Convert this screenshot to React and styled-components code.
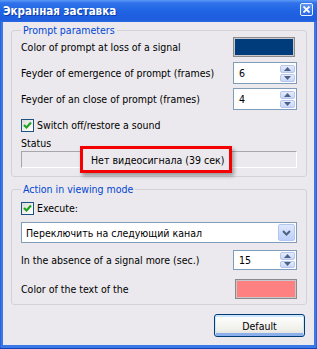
import React from 'react';
import styled, { createGlobalStyle } from 'styled-components';

const Global = createGlobalStyle`
	html, body {
		margin: 0;
		padding: 0;
		background: #ffffff;
	}
	body {
		font-family: "DejaVu Sans Condensed", "DejaVu Sans", sans-serif;
		font-size: 10.5px;
		color: #000;
	}
`;

const Window = styled.div`
	width: 317px;
	height: 349px;
	box-sizing: border-box;
	display: flex;
	flex-direction: column;
	padding: 0 3px 4px 3px;
	background: linear-gradient(90deg, #1a4fcc 0px, #3a78e8 1px, #3a78e8 316px, #1a4fcc 317px);
	box-shadow: inset 0 -1px 0 #1440b8;
`;

const TitleBar = styled.div`
	height: 22px;
	margin: 0 -3px;
	padding: 0 4px 0 3px;
	display: flex;
	align-items: center;
	justify-content: space-between;
	background: linear-gradient(#5b9af7 0px, #2f72ea 3px, #1f62e2 12px, #1e5ede 20px, #2c6ae2 22px);
`;

const Title = styled.span`
	color: #fff;
	font-family: "DejaVu Sans Condensed", "DejaVu Sans", sans-serif;
	font-weight: bold;
	font-size: 11.5px;
	text-shadow: 1px 1px 0 #0c3aa8;
	padding-bottom: 1px;
`;

const CloseButton = styled.div`
	width: 13px;
	height: 13px;
	box-sizing: border-box;
	border: 1px solid #e8eefc;
	border-radius: 2px;
	background: linear-gradient(#5f97f4, #2a68e4);
	display: flex;
	align-items: center;
	justify-content: center;
	margin-bottom: 3px;
`;

const Body = styled.div`
	flex: 1;
	background: #ebe9ed;
	padding: 2px 7px 0 8px;
	display: flex;
	flex-direction: column;
`;

const Group = styled.fieldset`
	margin: ${p => p.$top || 0}px 0 0 0;
	padding: 0 9px ${p => p.$bottom}px 9px;
	border: 1px solid #d3d0d6;
	border-radius: 3px;
	min-width: 0;
`;

const Legend = styled.legend`
	color: #0046d5;
	padding: 0 2px;
	margin-left: 0;
	line-height: 12px;
	font-size: 10.5px;
`;

const Row = styled.div`
	display: flex;
	align-items: center;
	justify-content: space-between;
	height: ${p => p.$h}px;
	margin-top: ${p => p.$mt || 0}px;
`;

const Label = styled.span`
	white-space: nowrap;
`;

const Swatch = styled.div`
	width: 62px;
	height: 20px;
	box-sizing: border-box;
	border: 1px solid #8a8a8a;
	box-shadow: inset 0 0 0 1px #c9c7cc;
	background: ${p => p.$color};
	margin-right: ${p => p.$mr || 0}px;
`;

const SpinBox = styled.div`
	width: 64px;
	height: ${p => p.$h}px;
	box-sizing: border-box;
	border: 1px solid #7f9db9;
	background: #fff;
	display: flex;
	align-items: center;
	justify-content: space-between;
	padding: 1px 1px 1px 5px;
`;

const SpinArrows = styled.div`
	display: flex;
	flex-direction: column;
	gap: 1px;
	height: 100%;
	justify-content: center;
`;

const SpinArrow = styled.div`
	width: 15px;
	height: 8px;
	box-sizing: border-box;
	border: 1px solid #b6c6ee;
	border-radius: 2px;
	background: linear-gradient(#e4ebfd, #c8d6f7);
	display: flex;
	align-items: center;
	justify-content: center;
`;

const CheckRow = styled.label`
	display: flex;
	align-items: center;
	gap: 3px;
	height: 14px;
	margin-top: ${p => p.$mt}px;
`;

const CheckBox = styled.span`
	width: 13px;
	height: 13px;
	box-sizing: border-box;
	border: 1px solid #1c5180;
	background: linear-gradient(135deg, #dcdcd7, #ffffff);
	display: flex;
	align-items: center;
	justify-content: center;
`;

const StatusCaption = styled.div`
	height: 12px;
	line-height: 12px;
	margin-top: 5px;
`;

const StatusField = styled.div`
	position: relative;
	height: 17px;
	margin-top: 2px;
	box-sizing: border-box;
	border-style: solid;
	border-width: 1px;
	border-color: #a7a6aa #ffffff #ffffff #a7a6aa;
`;

const Highlight = styled.div`
	position: absolute;
	left: 58px;
	top: -6px;
	width: 152px;
	height: 27px;
	box-sizing: border-box;
	border: 3px solid #f50000;
	background: #ebe9ed;
	box-shadow: 2px 3px 4px rgba(0, 0, 0, 0.35);
	display: flex;
	align-items: center;
	padding-left: 8px;
	white-space: nowrap;
`;

const Combo = styled.div`
	height: 21px;
	margin-top: 7px;
	box-sizing: border-box;
	border: 1px solid #7f9db9;
	background: #fff;
	display: flex;
	align-items: center;
	justify-content: space-between;
	padding: 1px 1px 1px 4px;
`;

const ComboButton = styled.div`
	width: 17px;
	height: 17px;
	box-sizing: border-box;
	border: 1px solid #b2c6f2;
	border-radius: 2px;
	background: linear-gradient(#dfe8fd, #bccff8);
	display: flex;
	align-items: center;
	justify-content: center;
`;

const Footer = styled.div`
	display: flex;
	justify-content: flex-end;
	margin-top: 9px;
	padding-right: 2px;
`;

const Button = styled.button`
	width: 91px;
	height: 23px;
	border: 1px solid #003c74;
	border-radius: 3px;
	background: linear-gradient(#ffffff, #f0f0ea 70%, #dcdad2);
	box-shadow: inset 0 1px 0 1px #cee7ff, inset 0 -2px 0 1px #8cb0ee;
	font-family: inherit;
	font-size: 10.5px;
	color: #000;
	padding: 0;
`;

const Up = () => (
	<svg width="7" height="4" viewBox="0 0 7 4"><path d="M0 4 L3.5 0 L7 4 Z" fill="#4d6185" /></svg>
);
const Down = () => (
	<svg width="7" height="4" viewBox="0 0 7 4"><path d="M0 0 L3.5 4 L7 0 Z" fill="#4d6185" /></svg>
);

const Spin = ({ value, h = 22 }) => (
	<SpinBox $h={h}>
		<span>{value}</span>
		<SpinArrows>
			<SpinArrow><Up /></SpinArrow>
			<SpinArrow><Down /></SpinArrow>
		</SpinArrows>
	</SpinBox>
);

const Check = () => (
	<CheckBox>
		<svg width="9" height="9" viewBox="0 0 9 9">
			<path d="M1 4 L3.5 6.5 L8 1.5" stroke="#21a121" strokeWidth="2.2" fill="none" />
		</svg>
	</CheckBox>
);

export default function App() {
	return (
		<>
			<Global />
			<Window>
				<TitleBar>
					<Title>Экранная заставка</Title>
					<CloseButton>
						<svg width="7" height="7" viewBox="0 0 7 7">
							<path d="M0.5 0.5 L6.5 6.5 M6.5 0.5 L0.5 6.5" stroke="#fff" strokeWidth="1.8" />
						</svg>
					</CloseButton>
				</TitleBar>
				<Body>
					<Group $bottom={8}>
						<Legend>Prompt parameters</Legend>
						<Row $h={21}>
							<Label>Color of prompt at loss of a signal</Label>
							<Swatch $color="#003c7c" $mr={2} />
						</Row>
						<Row $h={22} $mt={5}>
							<Label>Feyder of emergence of prompt (frames)</Label>
							<Spin value="6" />
						</Row>
						<Row $h={22} $mt={4}>
							<Label>Feyder of an close of prompt (frames)</Label>
							<Spin value="4" />
						</Row>
						<CheckRow $mt={8}>
							<Check />
							<span>Switch off/restore a sound</span>
						</CheckRow>
						<StatusCaption>Status</StatusCaption>
						<StatusField>
							<Highlight>Нет видеосигнала (39 сек)</Highlight>
						</StatusField>
					</Group>
					<Group $top={6} $bottom={5}>
						<Legend>Action in viewing mode</Legend>
						<CheckRow $mt={6}>
							<Check />
							<span>Execute:</span>
						</CheckRow>
						<Combo>
							<span>Переключить на следующий канал</span>
							<ComboButton>
								<svg width="9" height="6" viewBox="0 0 9 6">
									<path d="M1 1 L4.5 4.5 L8 1" stroke="#4d6185" strokeWidth="2" fill="none" />
								</svg>
							</ComboButton>
						</Combo>
						<Row $h={20} $mt={7}>
							<Label>In the absence of a signal more (sec.)</Label>
							<Spin value="15" h={20} />
						</Row>
						<Row $h={21} $mt={8}>
							<Label>Color of the text of the</Label>
							<Swatch $color="#ff8080" />
						</Row>
					</Group>
					<Footer>
						<Button>Default</Button>
					</Footer>
				</Body>
			</Window>
		</>
	);
}
